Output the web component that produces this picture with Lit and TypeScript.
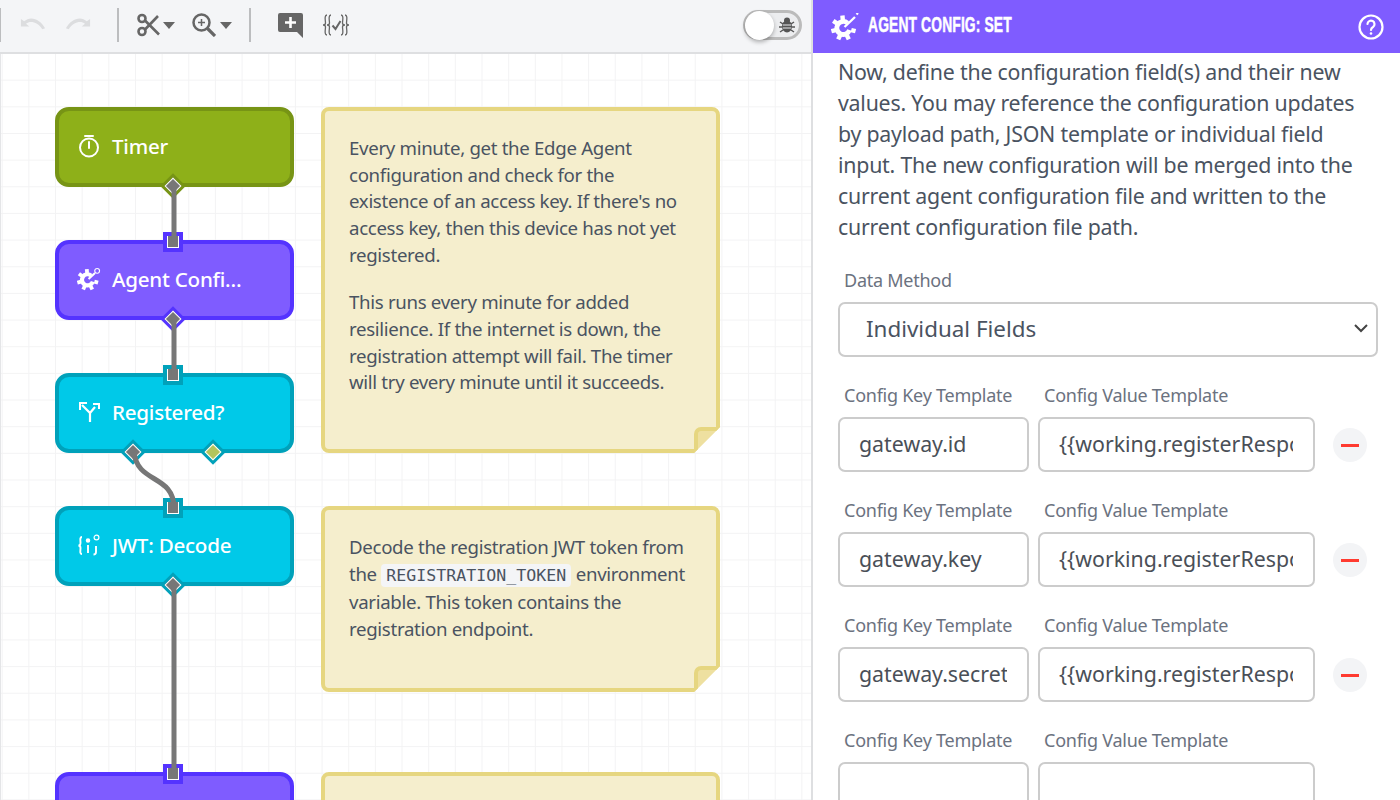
import { LitElement, html, svg, css } from 'lit'
import { customElement } from 'lit/decorators.js'

const gear = (tip: 'node' | 'wand') => {
  const teeth = [95, 145, 195, 245, 295, 345].map((deg) => {
    const a = (deg * Math.PI) / 180
    const x1 = 12.500 + Math.cos(a) * 8, y1 = 15 - Math.sin(a) * 8
    const x2 = 12.500 + Math.cos(a) * 12.500, y2 = 15 - Math.sin(a) * 12.500
    return svg`<line x1=${x1} y1=${y1} x2=${x2} y2=${y2} stroke-width="4.400" />`
  })
  return html`<svg viewBox="0 0 28 28" fill="none" stroke="#fff" stroke-linecap="butt">
    <path d="M16.500 10 A6.500 6.500 0 1 0 18.500 17" stroke-width="4.800" />
    ${teeth}
    <line x1="13.500" y1="14" x2=${tip === 'node' ? 21 : 24} y2=${tip === 'node' ? 7 : 4} stroke-width="2.400" />
    ${tip === 'node'
      ? svg`<circle cx="23.500" cy="4.500" r="2.800" stroke-width="1.300" />`
      : svg`<path d="M25.500 1.500 L27 0" stroke-width="2.200" />`}
  </svg>`
}

const timerIcon = html`<svg viewBox="0 0 24 24" fill="none" stroke="#fff" stroke-width="2"><circle cx="12" cy="13.500" r="9" /><path d="M8 2h8M12 8v6" stroke-linecap="round" /></svg>`
const branchIcon = html`<svg viewBox="0 0 24 24" fill="none" stroke="#fff" stroke-width="2.200"><path d="M13 22V13L5 5M13 13l5-6" /><path d="M3 10V3h7M16 4h6v5" stroke-width="2" /></svg>`
const jwtIcon = html`<svg viewBox="0 0 24 24" fill="none" stroke="#fff" stroke-width="1.900"><path d="M5 4C2.500 4 3.500 7 3.500 10S1.500 12.500 1.500 12.500 3.500 12.500 3.500 15 2.500 21 5 21M19 13v6c0 2-1 2.500-2.500 2.500" /><circle cx="11" cy="7.500" r="1.300" fill="#fff" /><path d="M11 12v8" /><circle cx="19.500" cy="4.500" r="2.400" stroke-width="1.200" /></svg>`

const NODES = [
  { y: 107, kind: 'green', label: 'Timer', icon: timerIcon, input: false },
  { y: 240, kind: 'purple', label: 'Agent Confi…', icon: gear('node'), input: true },
  { y: 373, kind: 'teal', label: 'Registered?', icon: branchIcon, input: true },
  { y: 506, kind: 'teal', label: 'JWT: Decode', icon: jwtIcon, input: true },
  { y: 772, kind: 'purple', label: '', icon: null, input: true }
]

const ROWS = [
  ['gateway.id', '{{working.registerResponse.body.id}}', true],
  ['gateway.key', '{{working.registerResponse.body.key}}', true],
  ['gateway.secret', '{{working.registerResponse.body.secret}}', true],
  ['', '', false]
]

@customElement('app-root')
export class AppRoot extends LitElement {
  static styles = css`
    :host {
      display: grid;
      grid-template-columns: 813px 587px;
      width: 1400px;
      height: 800px;
      overflow: hidden;
      font-family: 'Noto Sans', sans-serif;
      color: #4a5361;
      background: #fff;
    }

    .left {
      display: flex;
      flex-direction: column;
      height: 800px;
    }

    .toolbar {
      height: 50px;
      flex: none;
      display: flex;
      align-items: center;
      padding-bottom: 2px;
      background: #f4f5f7;
      border-bottom: 2px solid #dedfe1;
      border-right: 2px solid #dedfe1;
    }

    .sep {
      width: 2px;
      height: 34px;
      background: #bcbdbf;
      flex: none;
    }

    .tool {
      display: flex;
      flex: none;
    }

    .tool svg {
      display: block;
    }

    .toggle {
      margin-left: auto;
      margin-right: 9px;
      width: 59px;
      height: 30px;
      box-sizing: border-box;
      border: 3px solid #bbb;
      border-radius: 15px;
      background: #ecedef;
      display: flex;
      align-items: center;
      justify-content: space-between;
      padding-right: 4px;
    }

    .knob {
      width: 29px;
      height: 29px;
      margin-left: -1px;
      border-radius: 50%;
      background: #fff;
      box-shadow: 0 2px 4px rgba(0, 0, 0, 0.3);
    }

    .canvas {
      flex: 1;
      position: relative;
      overflow: hidden;
      border-left: 1px solid #e4e5e7;
      border-right: 2px solid #dedfe1;
      background-color: #fff;
      background-image: linear-gradient(#f3f3f4 1px, transparent 1px),
        linear-gradient(90deg, #f3f3f4 1px, transparent 1px);
      background-size: 26.67px 26.67px;
      background-position: 0.7px -1px;
    }

    .wires {
      position: absolute;
      left: 0;
      top: -54px;
      width: 813px;
      height: 800px;
      z-index: 2;
      pointer-events: none;
    }

    .node {
      position: absolute;
      left: 54px;
      width: 239px;
      height: 80px;
      box-sizing: border-box;
      border: 4px solid;
      border-radius: 14px;
      display: flex;
      align-items: center;
      padding: 0 0 2px 18px;
      gap: 11px;
      color: #fff;
      font-size: 20.6px;
      font-weight: 500;
      letter-spacing: -0.25px;
    }

    .node .ico {
      width: 24px;
      height: 24px;
      flex: none;
      display: flex;
    }

    .node svg {
      width: 100%;
      height: 100%;
    }

    .green {
      background: #8eb019;
      border-color: #779415;
      --edge: #779415;
    }

    .purple {
      background: #7f5cff;
      border-color: #5433ff;
      --edge: #5433ff;
    }

    .teal {
      background: #00c9e8;
      border-color: #00a1ba;
      --edge: #00a1ba;
    }

    .port {
      position: absolute;
      box-sizing: border-box;
      background: var(--edge);
      z-index: 1;
    }

    .port::after {
      content: '';
      position: absolute;
      background: #777;
      border: 1px solid #fff;
      box-sizing: border-box;
    }

    .in {
      width: 20px;
      height: 20px;
      top: -12px;
      left: 104px;
    }

    .in::after {
      inset: 4px;
      border-width: 1.5px;
      border-top: none;
    }

    .out {
      width: 18px;
      height: 18px;
      top: 66px;
      left: 105px;
      transform: rotate(45deg);
    }

    .out::after {
      inset: 3px;
    }

    .out.a {
      left: 65px;
    }

    .out.b {
      left: 145px;
    }

    .out.b::after {
      background: #b4c55c;
    }

    .note {
      position: absolute;
      left: 320px;
      width: 399px;
      box-sizing: border-box;
      padding: 24px;
      background: #f5eecd;
      border: 4px solid #e6d680;
      border-radius: 8px;
      font-size: 18.67px;
      line-height: 26.67px;
      letter-spacing: -0.32px;
      clip-path: polygon(0 0, 100% 0, 100% calc(100% - 26px), calc(100% - 26px) 100%, 0 100%);
    }

    .note p {
      margin: 0 0 21px;
      white-space: nowrap;
    }

    .ear {
      position: absolute;
      right: -4px;
      bottom: -4px;
      width: 26px;
      height: 26px;
      box-sizing: border-box;
      background: #eee0a0;
      border-top: 4px solid #e6d680;
      border-left: 4px solid #e6d680;
      border-top-left-radius: 7px;
    }

    code {
      font-family: 'DejaVu Sans Mono', monospace;
      font-size: 16.6px;
      letter-spacing: 0;
      background: #f4f5f7;
      border-radius: 4px;
      padding: 2px 5px;
    }

    .right {
      display: flex;
      flex-direction: column;
      height: 800px;
      overflow: hidden;
    }

    .head {
      height: 53px;
      flex: none;
      background: #7f5cff;
      color: #fff;
      display: flex;
      align-items: center;
      padding: 0 16px 0 18px;
      gap: 9px;
    }

    .head .gear {
      width: 28px;
      height: 28px;
      display: flex;
    }

    .head h1 {
      margin: 0 0 3px;
      flex: 1;
      font-family: 'Liberation Sans', sans-serif;
      font-size: 22px;
      font-weight: 700;
      letter-spacing: 0.2px;
      -webkit-text-stroke: 0.5px #fff;
      white-space: nowrap;
      transform: scaleX(0.63);
      transform-origin: left center;
    }

    .body {
      padding: 3px 22px 0 25px;
    }

    .intro {
      margin: 0 0 27px;
      font-size: 21.33px;
      line-height: 31px;
      letter-spacing: -0.22px;
      white-space: nowrap;
    }

    label {
      display: block;
      margin: 0 0 11px 6px;
      font-size: 18px;
      line-height: 22px;
      letter-spacing: -0.25px;
      color: #6b7280;
      white-space: nowrap;
    }

    .select {
      height: 55px;
      box-sizing: border-box;
      border: 2px solid #ccc;
      border-radius: 7px;
      display: flex;
      align-items: center;
      justify-content: space-between;
      padding: 0 8px 2px 26px;
      font-size: 22.4px;
      margin-bottom: 27px;
    }

    .row {
      display: grid;
      grid-template-columns: 191px 277px 70px;
      column-gap: 9px;
      margin-bottom: 27px;
    }

    input {
      display: block;
      width: 100%;
      height: 55px;
      box-sizing: border-box;
      border: 2px solid #ccc;
      border-radius: 7px;
      padding: 0 20px 2px 19px;
      font: inherit;
      font-size: 21.33px;
      color: #4a4f57;
      outline: none;
      background: #fff;
    }

    .minus {
      align-self: end;
      justify-self: center;
      width: 34px;
      height: 34px;
      margin-bottom: 10px;
      margin-right: 18px;
      border-radius: 50%;
      background: #f3f4f6;
      display: flex;
      align-items: center;
      justify-content: center;
    }

    .minus::before {
      content: '';
      width: 18px;
      height: 3px;
      background: #ff3b30;
    }
  `

  renderToolbar() {
    return html`<div class="toolbar">
      <div class="sep" style="margin-left:-1px"></div>
      <div class="tool" style="margin-left:19px">
        <svg width="26" height="19" viewBox="0 0 28 20" fill="#dcdddf"><path d="M1 3v8h9L6.500 8C11 4.500 19 6 24 14l3-1C22 3 11 -1 4.500 5.500z" /></svg>
      </div>
      <div class="tool" style="margin-left:19px">
        <svg width="26" height="19" viewBox="0 0 28 20" fill="#dcdddf"><path d="M27 3v8h-9l3.500-3C17 4.500 9 6 4 14l-3-1C6 3 17 -1 23.500 5.500z" /></svg>
      </div>
      <div class="sep" style="margin-left:26px"></div>
      <div class="tool" style="margin-left:18px">
        <svg width="24" height="24" viewBox="0 0 24 24" fill="none" stroke="#666" stroke-width="2.600"><circle cx="5" cy="5.500" r="3.500" /><circle cx="5" cy="18.500" r="3.500" /><path d="M8 7.500l14 14M8 16.500L21 3" /></svg>
      </div>
      <div class="tool" style="margin-left:2px">
        <svg width="12" height="7" viewBox="0 0 12 7" fill="#666"><path d="M0 0h12L6 7z" /></svg>
      </div>
      <div class="tool" style="margin-left:17px">
        <svg width="24" height="24" viewBox="0 0 24 24" fill="none" stroke="#666" stroke-width="2.500"><circle cx="9.500" cy="9.500" r="8" /><path d="M15.500 15.500L23 23" stroke-width="3.200" /><path d="M9.500 6v7M6 9.500h7" stroke-width="1.500" /></svg>
      </div>
      <div class="tool" style="margin-left:4px">
        <svg width="12" height="7" viewBox="0 0 12 7" fill="#666"><path d="M0 0h12L6 7z" /></svg>
      </div>
      <div class="sep" style="margin-left:17px"></div>
      <div class="tool" style="margin-left:27px">
        <svg width="26" height="25" viewBox="0 0 26 25" fill="#666"><path d="M2 0h21a2 2 0 0 1 2 2v23l-6-6H2a2 2 0 0 1-2-2V2a2 2 0 0 1 2-2z" /><path d="M12.500 4v11M7 9.500h11" stroke="#fff" stroke-width="2.600" fill="none" /></svg>
      </div>
      <div class="tool" style="margin-left:18px">
        <svg width="28" height="24" viewBox="0 0 28 24" fill="none" stroke="#666" stroke-width="1.300"><path d="M5 2C2 2 3.500 8 3.500 10S1 12 1 12s2.500 0 2.500 2S2 22 5 22M9 2C6 2 7.500 8 7.500 10S5 12 5 12s2.500 0 2.500 2S6 22 9 22M23 2c3 0 1.500 6 1.500 8S27 12 27 12s-2.500 0-2.500 2S26 22 23 22M19 2c3 0 1.500 6 1.500 8S23 12 23 12s-2.500 0-2.500 2 1.500 8-1.500 8" /><path d="M10.500 12.500l3 3.500 5-8" stroke-width="2" /></svg>
      </div>
      <div class="toggle">
        <div class="knob"></div>
        <svg width="16" height="16" viewBox="0 0 16 16" fill="#555"><ellipse cx="8" cy="9.500" rx="5" ry="6" /><circle cx="8" cy="3.500" r="3" /><path d="M1 5l3 2M15 5l-3 2M0 10h3M16 10h-3M1 15l3-2M15 15l-3-2" stroke="#555" stroke-width="1.500" /><path d="M4 8h8M4 11h8" stroke="#ecedef" /></svg>
      </div>
    </div>`
  }

  renderCanvas() {
    return html`<div class="canvas">
      <svg class="wires" viewBox="0 0 813 800" fill="none" stroke="#777" stroke-width="5">
        <path d="M173 186V242M173 319V375M173 585V774" />
        <path d="M133 452C136 484 173 474 173 508" />
      </svg>
      ${NODES.map(
        (n) => html`<div class="node ${n.kind}" style="top:${n.y - 54}px">
          ${n.icon ? html`<span class="ico">${n.icon}</span>` : ''}
          <span>${n.label}</span>
          ${n.input ? html`<div class="port in"></div>` : ''}
          ${n.label === 'Registered?'
            ? html`<div class="port out a"></div><div class="port out b"></div>`
            : n.label ? html`<div class="port out"></div>` : ''}
        </div>`
      )}
      <div class="note" style="top:53px;height:346px">
        <p>Every minute, get the Edge Agent<br />configuration and check for the<br />existence of an access key. If there's no<br />access key, then this device has not yet<br />registered.</p>
        <p>This runs every minute for added<br />resilience. If the internet is down, the<br />registration attempt will fail. The timer<br />will try every minute until it succeeds.</p>
        <div class="ear"></div>
      </div>
      <div class="note" style="top:452px;height:186px">
        <p>Decode the registration JWT token from<br />the <code>REGISTRATION_TOKEN</code> environment<br />variable. This token contains the<br />registration endpoint.</p>
        <div class="ear"></div>
      </div>
      <div class="note" style="top:718px;height:120px"></div>
    </div>`
  }

  render() {
    return html`
      <div class="left">${this.renderToolbar()}${this.renderCanvas()}</div>
      <div class="right">
        <div class="head">
          <span class="gear">${gear('wand')}</span>
          <h1>AGENT CONFIG: SET</h1>
          <svg width="26" height="26" viewBox="0 0 26 26" fill="none" stroke="#fff" stroke-width="2.200"><circle cx="13" cy="13" r="11.500" /><path d="M9.500 10a3.500 3.500 0 1 1 5.500 3c-1.300.8-2 1.500-2 3" stroke-linecap="round" /><circle cx="13" cy="19.500" r="1.300" fill="#fff" stroke="none" /></svg>
        </div>
        <div class="body">
          <p class="intro">Now, define the configuration field(s) and their new<br />values. You may reference the configuration updates<br />by payload path, JSON template or individual field<br />input. The new configuration will be merged into the<br />current agent configuration file and written to the<br />current configuration file path.</p>
          <label>Data Method</label>
          <div class="select">
            <span>Individual Fields</span>
            <svg width="14" height="9" viewBox="0 0 14 9" fill="none" stroke="#444" stroke-width="2"><path d="M1 1l6 6 6-6" /></svg>
          </div>
          ${ROWS.map(
            ([key, value, removable]) => html`<div class="row">
              <div><label>Config Key Template</label><input .value=${key} /></div>
              <div><label>Config Value Template</label><input .value=${value} /></div>
              ${removable ? html`<div class="minus"></div>` : ''}
            </div>`
          )}
        </div>
      </div>
    `
  }
}
